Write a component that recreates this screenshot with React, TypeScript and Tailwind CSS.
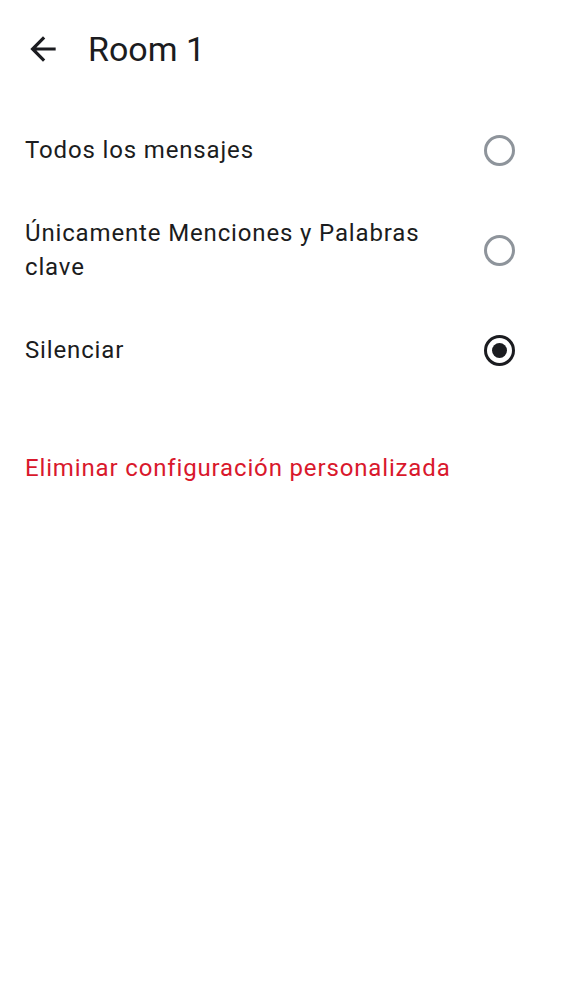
import { useState } from 'react';

const options = [
  { id: 'all', label: 'Todos los mensajes' },
  { id: 'mentions', label: 'Únicamente Menciones y Palabras clave' },
  { id: 'mute', label: 'Silenciar' },
];

function Radio({ checked }: { checked: boolean }) {
  return (
    <span
      className={`flex h-[31px] w-[31px] shrink-0 items-center justify-center rounded-full border-[3px] ${
        checked ? 'border-[#1b1c20]' : 'border-[#8e949b]'
      }`}
    >
      {checked && <span className="h-[15px] w-[15px] rounded-full bg-[#1b1c20]" />}
    </span>
  );
}

export default function App() {
  const [selected, setSelected] = useState('mute');

  return (
    <main className="min-h-screen bg-white text-[#1b1c20]" style={{ fontFamily: 'Roboto, "Noto Sans", sans-serif' }}>
      {/* Header */}
      <header className="flex h-[100px] items-center pb-[2px] pl-[24px]">
        <button aria-label="Volver" className="flex h-[38px] w-[38px] items-center justify-center">
          <svg viewBox="0 0 24 24" className="h-[38px] w-[38px]" fill="currentColor">
            <path d="M20 11H7.83l5.59-5.59L12 4l-8 8 8 8 1.41-1.41L7.83 13H20v-2z" />
          </svg>
        </button>
        <h1 className="ml-[26px] text-[34px] leading-none">Room 1</h1>
      </header>

      {/* Opciones */}
      <ul>
        {options.map((o) => (
          <li key={o.id}>
            <button
              onClick={() => setSelected(o.id)}
              className="flex min-h-[100px] w-full items-center justify-between gap-4 pl-[25px] pr-[47px] text-left"
            >
              <span className="max-w-[430px] text-[24px] leading-[34px] tracking-[0.85px]">{o.label}</span>
              <Radio checked={selected === o.id} />
            </button>
          </li>
        ))}
      </ul>

      <button className="mt-[44px] flex h-[48px] items-center pl-[25px] text-[24px] tracking-[0.85px] text-[#d9182c]">
        Eliminar configuración personalizada
      </button>
    </main>
  );
}
